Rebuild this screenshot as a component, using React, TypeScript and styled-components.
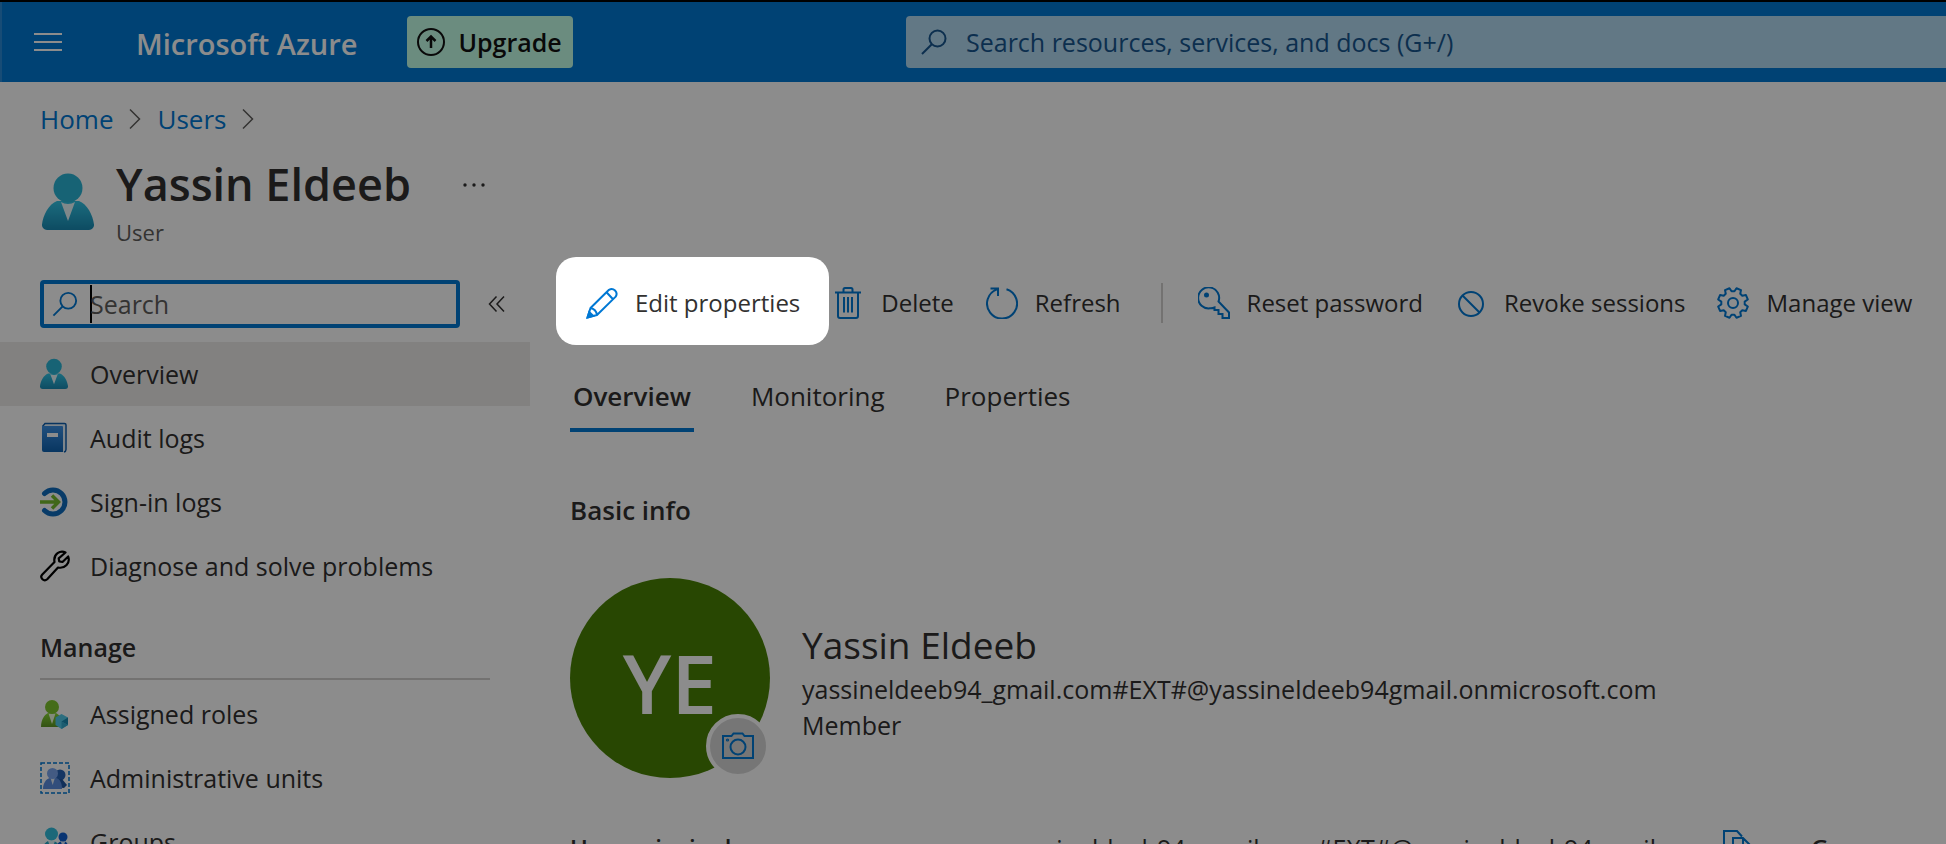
import React, { useId } from "react";
import styled, { createGlobalStyle, css } from "styled-components";

const blue = "#0078d4";
const ink = "#323130";
const muted = "#605e5c";
const font = '"Open Sans", "Noto Sans", sans-serif';

const GlobalStyle = createGlobalStyle`
  *, *::before, *::after { box-sizing: border-box; }
  body {
    margin: 0;
    background: #fff;
    color: ${ink};
    font-family: ${font};
    font-size: 25px;
    line-height: 36px;
  }
  h1, h2, p, dl, dt, dd, ul { margin: 0; padding: 0; }
  button, input { font: inherit; color: inherit; }
  svg { display: block; flex: none; }
`;

const Shell = styled.div`
  height: 100vh;
  overflow: hidden;
  border-top: 2px solid #000;
  display: flex;
  flex-direction: column;
`;

/* ---------- Top bar ---------- */

const TopBar = styled.header`
  flex: none;
  height: 80px;
  background: ${blue};
  border-left: 2px solid #2b8ad8;
  display: flex;
  align-items: center;
`;

const BrandArea = styled.div`
  flex: none;
  width: 904px;
  display: flex;
  align-items: center;
`;

const PlainButton = styled.button`
  border: 0;
  padding: 0;
  background: none;
  display: flex;
  align-items: center;
`;

const MenuButton = styled(PlainButton)`
  margin-left: 32px;
  color: #fff;
`;

const Brand = styled.a`
  margin-left: 74px;
  padding-top: 3px;
  color: #fff;
  font-size: 29px;
  font-weight: 600;
  text-decoration: none;
  white-space: nowrap;
`;

const UpgradeButton = styled(PlainButton)`
  margin-left: 50px;
  height: 52px;
  padding: 0 11px 0 9px;
  gap: 12px;
  border-radius: 4px;
  background: #c4ffe8;
  color: #111;
  font-weight: 600;
`;

const GlobalSearch = styled.label`
  flex: 1;
  min-width: 0;
  height: 52px;
  padding-left: 14px;
  display: flex;
  align-items: center;
  gap: 18px;
  border-radius: 4px 0 0 4px;
  background: #b2daf2;
  color: #17568f;
`;

const BareInput = styled.input`
  flex: 1;
  min-width: 0;
  height: 36px;
  border: 0;
  padding: 0;
  outline: 0;
  background: transparent;
  &::placeholder { color: ${(p: { $tone: string }) => p.$tone}; opacity: 1; }
`;

/* ---------- Page heading ---------- */

const Breadcrumb = styled.nav`
  flex: none;
  padding: 19px 40px 0;
  display: flex;
  align-items: center;
  gap: 16px;
  font-size: 26px;
  a { color: ${blue}; text-decoration: none; }
  svg { color: ${muted}; }
`;

const Heading = styled.div`
  flex: none;
  padding: 17px 40px 0;
  display: flex;
  gap: 22px;
`;

const HeadingIcon = styled.div`
  padding: 19px 0 0 2px;
`;

const Title = styled.h1`
  font-size: 45px;
  line-height: 60px;
  font-weight: 600;
  display: flex;
  align-items: center;
  gap: 50px;
`;

const Subtitle = styled.p`
  font-size: 22px;
  color: ${muted};
`;

/* ---------- Body ---------- */

const Body = styled.div`
  flex: 1;
  min-height: 0;
  padding-top: 30px;
  display: grid;
  grid-template-columns: 530px minmax(0, 1fr);
`;

const Sidebar = styled.aside`
  min-width: 0;
`;

const SidebarSearch = styled.div`
  padding: 0 24px 14px 40px;
  display: flex;
  align-items: center;
  justify-content: space-between;
`;

const FilterBox = styled.label`
  width: 420px;
  height: 48px;
  padding: 0 8px;
  border: 4px solid ${blue};
  border-radius: 4px;
  display: flex;
  align-items: center;
`;

const Caret = styled.span`
  width: 2px;
  height: 38px;
  margin: 0 -2px 0 12px;
  background: #000;
`;

const NavList = styled.ul`
  list-style: none;
`;

const NavLink = styled.a<{ $current?: boolean }>`
  height: 64px;
  padding-left: 40px;
  display: flex;
  align-items: center;
  gap: 20px;
  color: ${ink};
  text-decoration: none;
  background: ${(p) => (p.$current ? "#edebe9" : "transparent")};
`;

const GroupTitle = styled.h2`
  margin: 0 40px 2px;
  padding: 31px 0 13px;
  border-bottom: 2px solid #d2d0ce;
  font-size: 25px;
  font-weight: 600;
`;

const Main = styled.main`
  min-width: 0;
  padding-left: 40px;
`;

const Toolbar = styled.div`
  height: 46px;
  padding-left: 16px;
  display: flex;
  align-items: center;
  gap: 32px;
  font-size: 24px;
  white-space: nowrap;
`;

/* The highlighted command casts the dimming layer over everything else. */
const spotlight = css`
  position: relative;
  z-index: 10;
  &::before {
    content: "";
    position: absolute;
    z-index: -1;
    inset: -28px -29px -24px -30px;
    border-radius: 20px;
    background: #fff;
    box-shadow: 0 0 0 4000px rgba(0, 0, 0, 0.45);
  }
`;

const Command = styled(PlainButton)<{ $spotlit?: boolean }>`
  flex: none;
  gap: 17px;
  svg { color: ${blue}; }
  ${(p) => p.$spotlit && spotlight}
`;

const Separator = styled.span`
  width: 2px;
  height: 40px;
  margin: 0 3px 0 8px;
  background: #d2d0ce;
`;

const Tabs = styled.div`
  padding-top: 50px;
  display: flex;
  gap: 54px;
`;

const Tab = styled.button<{ $active?: boolean }>`
  height: 56px;
  padding: 0 3px 12px;
  border: 0;
  border-bottom: 4px solid ${(p) => (p.$active ? blue : "transparent")};
  background: none;
  font-size: 26px;
  font-weight: ${(p) => (p.$active ? 600 : 400)};
`;

const SectionTitle = styled.h2`
  padding-top: 60px;
  font-size: 26px;
  font-weight: 600;
`;

const Profile = styled.section`
  padding-top: 50px;
  display: flex;
  gap: 32px;
`;

const Avatar = styled.div`
  position: relative;
  width: 200px;
  height: 200px;
  padding-top: 8px;
  border-radius: 50%;
  background: #498205;
  color: #fff;
  font-size: 82px;
  font-weight: 600;
  display: flex;
  align-items: center;
  justify-content: center;
`;

const PhotoButton = styled.button`
  position: absolute;
  right: 0;
  bottom: 0;
  width: 64px;
  height: 64px;
  padding: 0;
  border: 4px solid #fff;
  border-radius: 50%;
  background: #d8d8d8;
  color: ${blue};
  display: flex;
  align-items: center;
  justify-content: center;
`;

const Identity = styled.div`
  padding-top: 40px;
`;

const FullName = styled.p`
  font-size: 37px;
  line-height: 53px;
`;

const Facts = styled.dl`
  padding-top: 52px;
  display: grid;
  grid-template-columns: 436px 717px 88px auto;
  white-space: nowrap;
  dt { font-size: 24px; font-weight: 600; }
`;

/* ---------- Icons ---------- */

const Stroke = ({ w, h = w, box, sw = 2, children }: {
  w: number; h?: number; box?: string; sw?: number; children: React.ReactNode;
}) => (
  <svg width={w} height={h} viewBox={box ?? `0 0 ${w} ${h}`} fill="none"
    stroke="currentColor" strokeWidth={sw} aria-hidden="true">
    {children}
  </svg>
);

const MenuIcon = () => (
  <Stroke w={28} h={20}><path d="M0 2h28M0 10h28M0 18h28" /></Stroke>
);

const UpgradeIcon = () => (
  <Stroke w={30}>
    <circle cx="15" cy="15" r="13" />
    <path d="M15 21V9.500M10.500 14L15 9.500l4.500 4.500" strokeWidth="2.500" />
  </Stroke>
);

const SearchIcon = () => (
  <Stroke w={28}>
    <circle cx="17.500" cy="10.500" r="8" />
    <path d="M11.800 16.200L2 26" />
  </Stroke>
);

const Chevron = () => (
  <Stroke w={12} h={22} sw={1.5}><path d="M1 1.500l9.500 9.500L1 20.500" /></Stroke>
);

const MoreIcon = () => (
  <svg width="26" height="6" viewBox="0 0 26 6" fill="currentColor" aria-hidden="true">
    <circle cx="4" cy="4" r="1.700" /><circle cx="13" cy="4" r="1.700" /><circle cx="22" cy="4" r="1.700" />
  </svg>
);

const CollapseIcon = () => (
  <Stroke w={18} h={18} sw={1.5}><path d="M8.500 1.500L1.500 9l7 7.500M16 1.500L9 9l7 7.500" /></Stroke>
);

const PersonIcon = ({ w = 28, h = 32 }: { w?: number; h?: number }) => {
  const id = useId();
  return (
    <svg width={w} height={h} viewBox="0 0 52 58" aria-hidden="true">
      <linearGradient id={id} x1="0" y1="0" x2="0" y2="1">
        <stop offset="0" stopColor="#32c4e5" /><stop offset="1" stopColor="#198ab3" />
      </linearGradient>
      <path d="M5 57a5 5 0 0 1-5-5.500C1 42 7 31 15 28h22c8 3 14 14 15 23.500A5 5 0 0 1 47 57Z" fill={`url(#${id})`} />
      <path d="M26 31q-4 0-7-2l7 19 7-19q-3 2-7 2" fill="#e8f8fc" />
      <ellipse cx="26" cy="15" rx="14.500" ry="14.500" fill="#2bb5d5" />
    </svg>
  );
};

const BookIcon = () => (
  <svg width="28" height="32" viewBox="0 0 28 32" aria-hidden="true">
    <linearGradient id="book" x1="0" y1="0" x2="0" y2="1">
      <stop offset="0" stopColor="#3c91e5" /><stop offset="1" stopColor="#0f62b0" />
    </linearGradient>
    <path d="M4 1h20a2 2 0 0 1 2 2v25a2 2 0 0 1-2 2H5Z" fill="#e6f2fb" />
    <path d="M2.500 4.500L5 1.500h19.500a1.500 1.500 0 0 1 1.500 1.500v24.500q0 2-2 2.500" fill="none" stroke="#0f5fae" strokeWidth="1.500" />
    <path d="M2 4h20q1 0 1 1v25H4q-2 0-2-2Z" fill="url(#book)" />
    <rect x="7" y="11" width="11" height="4" fill="#fff" />
  </svg>
);

const SignInIcon = () => (
  <svg width="28" height="32" viewBox="0 0 28 32" fill="none" aria-hidden="true">
    <path d="M4.500 7.500A12 12 0 1 1 4.500 24.500" stroke="#0f6cbd" strokeWidth="5" strokeLinecap="round" />
    <path d="M0 16h18M12 9.500l6.500 6.500-6.500 6.500" stroke="#76bc2d" strokeWidth="3.500" />
  </svg>
);

const WrenchIcon = () => (
  <svg width="30" height="32" viewBox="0 0 30 32" fill="none" stroke="#000" strokeWidth="2.200" strokeLinejoin="round" aria-hidden="true">
    <path d="M25.500 2.500C20.500-.2 13 3.800 14.500 12L2.300 24.500c-3 3.300 1.700 7.700 4.900 4.700L18 17.500c7 1.500 12.500-4.500 10.200-11L22.500 12l-3.300-.6-.5-3.100Z" />
  </svg>
);

const RoleIcon = () => (
  <svg width="28" height="32" viewBox="0 0 28 32" aria-hidden="true">
    <linearGradient id="role" x1="0" y1="0" x2="0" y2="1">
      <stop offset="0" stopColor="#86d633" /><stop offset="1" stopColor="#5e9624" />
    </linearGradient>
    <path d="M1 29c0-7 3-12 7-14h8c4 2 7 7 7 14Z" fill="url(#role)" />
    <path d="M8.500 15.500L12 26l3.500-10.500Z" fill="#eefbe0" />
    <circle cx="12" cy="9" r="7" fill="#7fc52e" />
    <path d="M21.500 16l6.500 3.500v7.500L21.500 31 15.500 27v-7.500Z" fill="#50c8e8" />
    <path d="M21.500 23.500l6.500-4v7.500Z" fill="#198ab3" /><path d="M21.500 23.500V31l6.500-4Z" fill="#32a8cc" />
  </svg>
);

const UnitsIcon = () => (
  <svg width="30" height="32" viewBox="0 0 30 32" aria-hidden="true">
    <rect x="1" y="1" width="28" height="30" fill="none" stroke={blue} strokeWidth="1.500" strokeDasharray="4 2" />
    <circle cx="20" cy="13" r="5.500" fill="#2763b5" />
    <path d="M14 25c1-5 3-8 8-8l5 6-3 3Z" fill="#1f56a3" />
    <path d="M3 27c0-6 3-10 7-11h6c4 1 6 5 6 11Z" fill="#5b8fe0" />
    <path d="M10.500 16l2.200 7 2.200-7Z" fill="#e5effa" />
    <circle cx="12.500" cy="11.500" r="5.500" fill="#7ba7ee" />
  </svg>
);

const GroupsIcon = () => (
  <svg width="30" height="32" viewBox="0 0 30 32" aria-hidden="true">
    <path d="M15 28c0-8 3-13 8-13s6 6 6 13Z" fill="#0f5fd0" />
    <path d="M20.500 15l2.500 6 2.500-6Z" fill="#dce9fb" />
    <circle cx="23" cy="11" r="4.500" fill="#0f5fd0" />
    <path d="M1 30c0-8 3-13 7-15h6c5 2 7 7 7 15Z" fill="#28a9c8" />
    <path d="M8 15l3.500 9 3.500-9Z" fill="#e4f8fc" />
    <circle cx="11.500" cy="8" r="6.500" fill="#32bedd" />
  </svg>
);

const PencilIcon = () => (
  <Stroke w={32}>
    <path d="M1.500 30.500l3-9.500L23 2.800a4.900 4.900 0 0 1 6.700 6.800L11 28Z M4.500 21q5.500 1 6.500 7M20.500 5.300l6.300 6.700M1.500 30.500l1.700-5.500" strokeLinejoin="round" />
    <path d="M1.500 30.500l1.800-5.500 3.800 3.700Z" fill="currentColor" />
  </Stroke>
);

const TrashIcon = () => (
  <Stroke w={32}>
    <path d="M3 5.500h26M6 5.500V29q0 2 2 2h16q2 0 2-2V5.500M11.500 5V2.500q0-1.500 1.500-1.500h6q1.500 0 1.500 1.500V5M12 10v15.500M16 10v15.500M20 10v15.500" />
  </Stroke>
);

const RefreshIcon = () => (
  <Stroke w={32}>
    <path d="M20.500 2.200A15 15 0 1 1 11 2.400M4.500 1.500H12V9" />
  </Stroke>
);

const KeyIcon = () => (
  <Stroke w={32}>
    <path d="M20.500 14.500A10.500 10.500 0 1 0 12 21.300q2.500.2 4.500-.8V23h4v4h4v4H31v-5.500Z" />
    <circle cx="8.500" cy="8" r="1.500" fill="currentColor" />
  </Stroke>
);

const BlockIcon = () => (
  <Stroke w={32}><circle cx="16" cy="17" r="12" /><path d="M7.500 8.500l17 17" /></Stroke>
);

const GearIcon = () => {
  const teeth = 8;
  const points: string[] = [];
  for (let i = 0; i < teeth; i++) {
    const base = (i + 0.5) * ((Math.PI * 2) / teeth);
    [[-0.27, 11.8], [-0.16, 15.2], [0.16, 15.2], [0.27, 11.8]].forEach(([a, r]) => {
      points.push(`${(16 + r * Math.sin(base + a)).toFixed(2)},${(16 - r * Math.cos(base + a)).toFixed(2)}`);
    });
  }
  return (
    <Stroke w={32}>
      <polygon points={points.join(" ")} strokeLinejoin="round" />
      <circle cx="16" cy="16" r="5" />
    </Stroke>
  );
};

const CameraIcon = () => (
  <Stroke w={32} h={28}>
    <path d="M1 4h8.500l2-2.500h9l2 2.500H31v22H1Z" />
    <circle cx="16" cy="15" r="7.500" />
    <circle cx="5.500" cy="8" r=".6" />
  </Stroke>
);

const CopyIcon = () => (
  <Stroke w={30} h={36}>
    <path d="M10 27H1V1h13l5 5.500M10 8h10l8 8v18H10ZM20 8v8h8" />
  </Stroke>
);

const CopyButton = styled(PlainButton)`
  color: ${blue};
`;

/* ---------- Page ---------- */

const overviewLinks = [
  { label: "Overview", icon: <PersonIcon />, current: true },
  { label: "Audit logs", icon: <BookIcon /> },
  { label: "Sign-in logs", icon: <SignInIcon /> },
  { label: "Diagnose and solve problems", icon: <WrenchIcon /> },
];

const manageLinks = [
  { label: "Assigned roles", icon: <RoleIcon /> },
  { label: "Administrative units", icon: <UnitsIcon /> },
  { label: "Groups", icon: <GroupsIcon /> },
];

const IconSlot = styled.span`
  width: 30px;
  flex: none;
`;

const LinkList = ({ items }: { items: { label: string; icon: React.ReactNode; current?: boolean }[] }) => (
  <NavList>
    {items.map((item) => (
      <li key={item.label}>
        <NavLink href="#" $current={item.current}>
          <IconSlot>{item.icon}</IconSlot>
          {item.label}
        </NavLink>
      </li>
    ))}
  </NavList>
);

export default function App() {
  return (
    <Shell>
      <GlobalStyle />
      <TopBar>
        <BrandArea>
          <MenuButton aria-label="Show portal menu"><MenuIcon /></MenuButton>
          <Brand href="#">Microsoft Azure</Brand>
          <UpgradeButton><UpgradeIcon />Upgrade</UpgradeButton>
        </BrandArea>
        <GlobalSearch>
          <SearchIcon />
          <BareInput $tone="#17568f" type="text" aria-label="Search resources"
            placeholder="Search resources, services, and docs (G+/)" />
        </GlobalSearch>
      </TopBar>

      <Breadcrumb aria-label="Breadcrumb">
        <a href="#">Home</a>
        <Chevron />
        <a href="#">Users</a>
        <Chevron />
      </Breadcrumb>

      <Heading>
        <HeadingIcon><PersonIcon w={52} h={58} /></HeadingIcon>
        <div>
          <Title>
            Yassin Eldeeb
            <PlainButton aria-label="More"><MoreIcon /></PlainButton>
          </Title>
          <Subtitle>User</Subtitle>
        </div>
      </Heading>

      <Body>
        <Sidebar>
          <SidebarSearch>
            <FilterBox>
              <Stroke w={26} box="0 0 28 28">
                <circle cx="17.500" cy="10.500" r="8.500" stroke={blue} />
                <path d="M11.500 16.500L1.500 26.500" stroke={blue} />
              </Stroke>
              <Caret />
              <BareInput $tone={muted} type="text" aria-label="Search menu" placeholder="Search" />
            </FilterBox>
            <PlainButton aria-label="Collapse menu"><CollapseIcon /></PlainButton>
          </SidebarSearch>
          <LinkList items={overviewLinks} />
          <GroupTitle>Manage</GroupTitle>
          <LinkList items={manageLinks} />
        </Sidebar>

        <Main>
          <Toolbar role="toolbar" aria-label="User commands">
            <Command $spotlit><PencilIcon />Edit properties</Command>
            <Command><TrashIcon />Delete</Command>
            <Command><RefreshIcon />Refresh</Command>
            <Separator />
            <Command><KeyIcon />Reset password</Command>
            <Command><BlockIcon />Revoke sessions</Command>
            <Command><GearIcon />Manage view</Command>
          </Toolbar>

          <Tabs role="tablist">
            <Tab role="tab" aria-selected="true" $active>Overview</Tab>
            <Tab role="tab" aria-selected="false">Monitoring</Tab>
            <Tab role="tab" aria-selected="false">Properties</Tab>
          </Tabs>

          <SectionTitle>Basic info</SectionTitle>
          <Profile>
            <Avatar>
              YE
              <PhotoButton aria-label="Change photo"><CameraIcon /></PhotoButton>
            </Avatar>
            <Identity>
              <FullName>Yassin Eldeeb</FullName>
              <p>yassineldeeb94_gmail.com#EXT#@yassineldeeb94gmail.onmicrosoft.com</p>
              <p>Member</p>
            </Identity>
          </Profile>

          <Facts>
            <dt>User principal name</dt>
            <dd>yassineldeeb94_gmail.com#EXT#@yassineldeeb94gmail.on…</dd>
            <dd><CopyButton aria-label="Copy user principal name"><CopyIcon /></CopyButton></dd>
            <dt>Group memberships</dt>
          </Facts>
        </Main>
      </Body>
    </Shell>
  );
}
